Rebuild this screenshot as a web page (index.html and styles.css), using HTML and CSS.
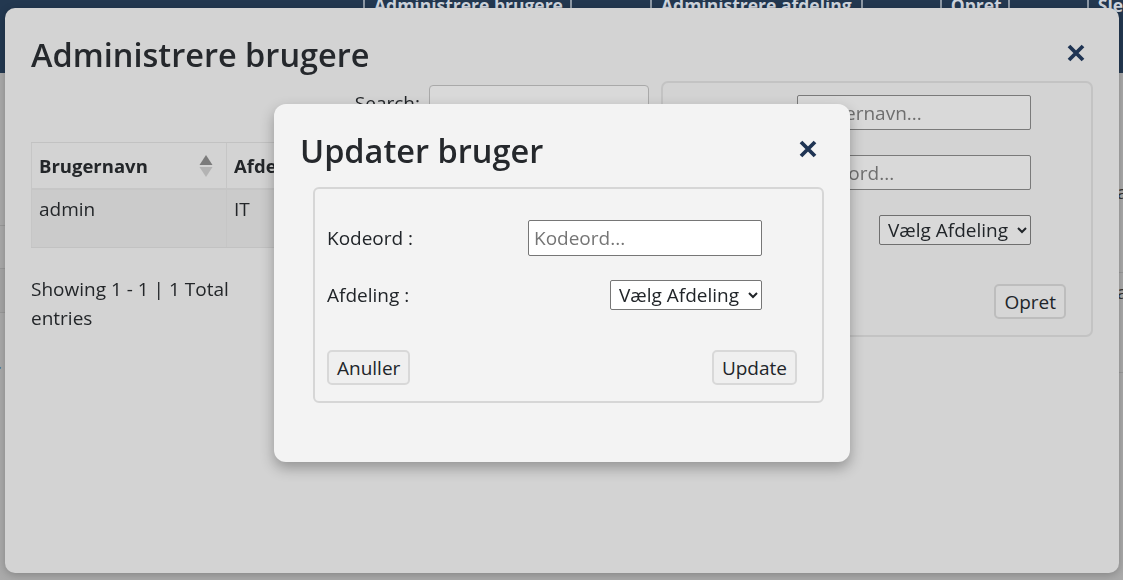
FILE: index.html
```html
<!DOCTYPE html>
<html lang="da">
<head>
<meta charset="utf-8">
<title>Administrere brugere</title>
<link rel="stylesheet" href="styles.css">
</head>
<body>
<div class="page">
  <nav class="topnav">
    <a class="nav-item nav-w1">Administrere brugere</a>
    <a class="nav-item nav-w2">Administrere afdeling</a>
    <a class="nav-item nav-w3">Opret</a>
    <a class="nav-item nav-w4">Slet</a>
  </nav>
  <div class="page-body">
    <div class="page-left">
      <div class="prow prow-a"></div>
      <div class="prow prow-b"></div>
      <div class="page-link">s.</div>
    </div>
    <div class="page-right">
      <div class="rrow">a</div>
      <div class="rrow">a</div>
    </div>
  </div>
</div>

<div class="layer outer-layer">
  <div class="modal modal-outer">
    <div class="modal-head">
      <h2 class="modal-title">Administrere brugere</h2>
      <button class="close-btn" aria-label="Luk">
        <svg viewBox="0 0 20 20" width="20" height="20"><path d="M3 3 L17 17 M17 3 L3 17"/></svg>
      </button>
    </div>
    <div class="outer-body">
      <div class="list-col">
        <div class="search-row">
          <label class="search-label">Search:</label>
          <input class="search-input" type="text">
        </div>
        <table class="tbl">
          <thead>
            <tr>
              <th class="col-user"><div class="th-inner"><span>Brugernavn</span>
                <svg class="sort" viewBox="0 0 14 22" width="14" height="22"><path class="sort-up" d="M7 0 L13.5 10 L0.5 10 Z"/><path class="sort-down" d="M0.5 12 L13.5 12 L7 22 Z"/></svg></div></th>
              <th class="col-dep">Afdeling</th>
              <th class="col-act"></th>
            </tr>
          </thead>
          <tbody>
            <tr>
              <td>admin</td>
              <td>IT</td>
              <td></td>
            </tr>
          </tbody>
        </table>
        <div class="info">Showing 1 - 1 | 1 Total entries</div>
      </div>
      <div class="create-panel">
        <div class="frow"><label>Brugernavn :</label><input class="in in-dim" type="text" placeholder="Brugernavn..."></div>
        <div class="frow"><label>Kodeord :</label><input class="in in-dim" type="password" placeholder="Kodeord..."></div>
        <div class="frow frow-sel"><label>Afdeling :</label><select class="sel sel-dim"><option>Vælg Afdeling</option></select></div>
        <div class="brow brow-end"><button class="btn btn-dim">Opret</button></div>
      </div>
    </div>
  </div>
</div>

<div class="layer inner-layer">
  <div class="modal modal-inner">
    <div class="modal-head">
      <h2 class="modal-title">Updater bruger</h2>
      <button class="close-btn close-inner" aria-label="Luk">
        <svg viewBox="0 0 20 20" width="20" height="20"><path d="M3 3 L17 17 M17 3 L3 17"/></svg>
      </button>
    </div>
    <div class="edit-box">
      <div class="frow frow-first"><label>Kodeord :</label><input class="in" type="password" placeholder="Kodeord..."></div>
      <div class="frow frow-sel2"><label>Afdeling :</label><select class="sel"><option>Vælg Afdeling</option></select></div>
      <div class="brow"><button class="btn">Anuller</button><button class="btn">Update</button></div>
    </div>
  </div>
</div>
</body>
</html>
```

FILE: styles.css
```css
* { box-sizing: border-box; }
html, body { margin: 0; height: 100%; }
body {
  background: #aaaaaa;
  font-family: "Open Sans", "Noto Sans", sans-serif;
  color: #212529;
  overflow: hidden;
}

/* background page */
.topnav {
  height: 73px;
  background: #233850;
  display: flex;
  align-items: flex-start;
  padding-left: 363px;
  overflow: hidden;
}
.nav-item {
  display: block;
  height: 80px;
  margin-top: -3px;
  padding: 0 9px;
  border-left: 2px solid #8e99a6;
  border-right: 2px solid #8e99a6;
  color: #cfd5dd;
  font-weight: 700;
  font-size: 17.5px;
  line-height: 1;
  white-space: nowrap;
}
.nav-w1 { width: 209px; }
.nav-w2 { width: 213px; margin-left: 78px; }
.nav-w3 { width: 70px; margin-left: 77px; }
.nav-w4 { width: 90px; margin-left: 77px; }

.page-body { display: flex; justify-content: space-between; }
.page-left { width: 300px; padding-top: 152px; }
.prow { border-top: 1px solid #999; }
.prow-a { height: 43px; }
.prow-b { height: 45px; background: #a5a5a5; border-bottom: 1px solid #999; }
.page-link { margin-top: 36px; color: #3f5f86; font-size: 19px; margin-left: -12px; }
.page-right { width: 200px; padding-top: 100px; font-size: 19px; color: #333; }
.rrow { height: 100px; padding-left: 194px; line-height: 30px; padding-top: 4px; border-bottom: 1px solid #999; }

/* layers */
.layer { position: fixed; inset: 0; }
.outer-layer { padding: 8px 4px 7px 5px; }
.modal { background: #f3f3f3; }
.modal-outer {
  height: 100%;
  background: #d3d3d3;
  border-radius: 10px;
  box-shadow: 0 2px 8px rgba(0, 0, 0, 0.22);
  padding: 26px;
  color: #232629;
}
.modal-head {
  display: flex;
  justify-content: space-between;
  align-items: center;
}
.modal-title {
  margin: 0;
  font-size: 32.5px;
  font-weight: 600;
  line-height: 41px;
  color: #25282c;
}
.close-btn {
  background: none;
  border: 0;
  padding: 0;
  width: 20px;
  height: 20px;
  margin-right: 7px;
  margin-top: -3px;
  display: block;
}
.close-btn svg { display: block; }
.close-btn path { stroke: #1f3453; stroke-width: 3.8; fill: none; stroke-linecap: butt; }
.close-inner { margin-right: 6px; }

.outer-body {
  display: flex;
  gap: 12px;
  margin-top: 6px;
  align-items: flex-start;
}
.list-col { width: 618px; }
.search-row {
  display: flex;
  justify-content: flex-end;
  align-items: flex-start;
  gap: 9px;
  margin-top: 4px;
  height: 35px;
}
.search-label { font-size: 19px; line-height: 30px; margin-top: 3px; }
.search-input {
  width: 220px;
  height: 35px;
  background: #d9d9d9;
  border: 1px solid #a9a9a9;
  border-radius: 4px;
}

.tbl {
  width: 618px;
  border-collapse: collapse;
  margin-top: 22px;
  font-size: 19px;
}
.tbl th {
  text-align: left;
  font-weight: 700;
  font-size: 18.5px;
  height: 46px;
  padding: 0 7px;
  border-top: 1px solid #c2c2c2;
  border-bottom: 2px solid #c6c6c6;
  border-left: 1px solid #c6c6c6;
}
.tbl td {
  background: #cbcbcb;
  vertical-align: top;
  padding: 7px 7px 8px;
  line-height: 24px;
  height: 59px;
  border-left: 1px solid #c6c6c6;
  border-bottom: 1px solid #c2c2c2;
}
.col-user { width: 195px; }
.col-dep { width: 170px; }
.th-inner { display: flex; justify-content: space-between; align-items: center; }
.sort { margin-right: 6px; margin-top: 1px; }
.sort-up { fill: #7b7b7b; }
.sort-down { fill: #b3b3b3; }

.info {
  width: 230px;
  margin-top: 27px;
  font-size: 19px;
  line-height: 29px;
}

.create-panel {
  width: 432px;
  border: 2px solid #c3c3c3;
  border-radius: 7px;
  padding: 12px 25px 16px 12px;
}
.frow {
  display: flex;
  justify-content: space-between;
  align-items: center;
  padding-right: 35px;
  margin-bottom: 25px;
  font-size: 19px;
}
.frow label { line-height: 30px; }
.frow-sel { margin-bottom: 39px; }
.in {
  width: 234px;
  height: 35px;
  font: inherit;
  font-size: 19px;
  padding: 0 5px;
  border: 1px solid #767676;
  border-radius: 2px;
  background: #ffffff;
  color: #212529;
}
.in::placeholder { color: #757575; }
.in-dim { background: #d9d9d9; border-color: #7a7a7a; }
.in-dim::placeholder { color: #6e6e6e; }
.sel {
  width: 152px;
  height: 30px;
  font-family: inherit;
  font-size: 19px;
  padding: 0 2px 0 4px;
  border: 1px solid #767676;
  border-radius: 2px;
  background: #ffffff;
  color: #212529;
}
.sel-dim { background: #d9d9d9; border-color: #6f6f6f; }
.brow {
  display: flex;
  justify-content: space-between;
}
.brow-end { justify-content: flex-end; }
.btn {
  height: 35px;
  padding: 0 8px;
  font-family: inherit;
  font-size: 19px;
  color: #212529;
  background: #efefef;
  border: 2px solid #d8d8d8;
  border-radius: 5px;
}
.btn-dim { background: #d6d6d6; border-color: #bdbdbd; }

.modal-inner {
  margin: 104px 0 0 274px;
  width: 576px;
  height: 358px;
  border-radius: 12px;
  box-shadow: 0 6px 14px rgba(0, 0, 0, 0.3);
  padding: 26px 26px 0 26px;
}
.edit-box {
  margin: 16px 0 0 13px;
  border: 2px solid #d6d6d6;
  border-radius: 6px;
  padding: 31px 25px 16px 12px;
}
.edit-box .in { height: 36px; }
.frow-first { margin-bottom: 24px; }
.frow-sel2 { margin-bottom: 40px; }
```
